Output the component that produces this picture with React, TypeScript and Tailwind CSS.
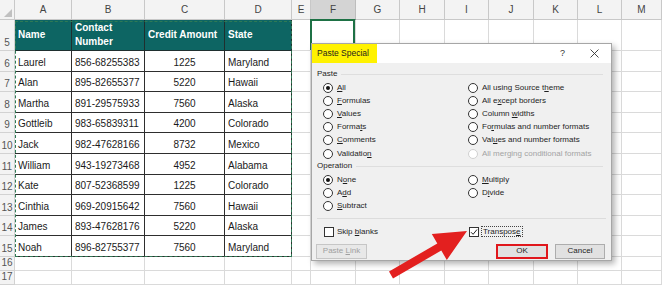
import clsx from 'clsx'

const widths = [
  'w-[15px]', 'w-[57px]', 'w-[73px]', 'w-[80px]', 'w-[67px]', 'w-[19px]', 'w-[45px]',
  'w-[44px]', 'w-[45px]', 'w-[44px]', 'w-[45px]', 'w-[44px]', 'w-[44px]', 'w-[40px]',
]
const letters = ['A', 'B', 'C', 'D', 'E', 'F', 'G', 'H', 'I', 'J', 'K', 'L', 'M']

const people = [
  ['Laurel', '856-68255383', '1225', 'Maryland'],
  ['Alan', '895-82655377', '5220', 'Hawaii'],
  ['Martha', '891-29575933', '7560', 'Alaska'],
  ['Gottleib', '983-65839311', '4200', 'Colorado'],
  ['Jack', '982-47628166', '8732', 'Mexico'],
  ['William', '943-19273468', '4952', 'Alabama'],
  ['Kate', '807-52368599', '1225', 'Colorado'],
  ['Cinthia', '969-20915642', '7560', 'Hawaii'],
  ['James', '893-47628176', '5220', 'Alaska'],
  ['Noah', '896-82755377', '7560', 'Maryland'],
]

// "&" marks the accelerator letter
function Label({ text, disabled }: { text: string; disabled?: boolean }) {
  const i = text.indexOf('&')
  const pre = text.slice(0, i)
  const key = text.charAt(i + 1)
  const post = text.slice(i + 2)
  return (
    <span className={clsx('whitespace-nowrap', disabled && 'text-[#a3a3a3]')}>
      {pre}
      <span className="underline underline-offset-1">{key}</span>
      {post}
    </span>
  )
}

function Radio({ label, checked, disabled }: { label: string; checked?: boolean; disabled?: boolean }) {
  return (
    <div className="flex h-[13.2px] items-center gap-[4px]">
      <span
        className={clsx(
          'flex h-[10px] w-[10px] items-center justify-center rounded-full border bg-white',
          disabled ? 'border-[#d0d0d0] bg-[#f4f4f4]' : 'border-[#333]'
        )}
      >
        {checked && <span className="h-[4px] w-[4px] rounded-full bg-[#111]" />}
      </span>
      <Label text={label} disabled={disabled} />
    </div>
  )
}

function Check({ checked }: { checked?: boolean }) {
  return (
    <span className="flex h-[10px] w-[10px] items-center justify-center border border-[#333] bg-white">
      {checked && (
        <svg width="8" height="8" viewBox="0 0 8 8">
          <path d="M1 4.2 L3.1 6.3 L7 1.5" fill="none" stroke="#222" strokeWidth="1" />
        </svg>
      )}
    </span>
  )
}

function GroupLabel({ text }: { text: string }) {
  return (
    <div className="flex h-[12px] items-center gap-[4px] pl-[5px] pr-[8px]">
      <span>{text}</span>
      <span className="h-px flex-1 bg-[#dedede]" />
    </div>
  )
}

function Dialog() {
  return (
    <div className="absolute left-[311px] top-[43px] flex h-[218px] w-[301px] flex-col border border-[#a6a6a6] bg-[#f0f0f0] text-[8px] text-[#1e1e1e] shadow-[3px_3px_6px_rgba(0,0,0,0.3)]">
      <div className="flex h-[19px] shrink-0 items-center bg-white">
        <div className="flex h-full w-[65px] items-center bg-[#fff200] pl-[5px] text-[8.5px]">Paste Special</div>
        <div className="flex-1" />
        <span className="mr-[25px] text-[9px] text-[#333]">?</span>
        <svg width="9" height="9" viewBox="0 0 9 9" className="mr-[12px]">
          <path d="M0.5 0.5 L8.5 8.5 M8.5 0.5 L0.5 8.5" stroke="#333" strokeWidth="0.9" />
        </svg>
      </div>

      <div className="mt-[5px]">
        <GroupLabel text="Paste" />
      </div>
      <div className="mt-[1px] grid grid-cols-[145px_1fr] pl-[11px]">
        <div>
          <Radio label="&All" checked />
          <Radio label="&Formulas" />
          <Radio label="&Values" />
          <Radio label="Forma&ts" />
          <Radio label="&Comments" />
          <Radio label="Validatio&n" />
        </div>
        <div>
          <Radio label="All using Source t&heme" />
          <Radio label="All e&xcept borders" />
          <Radio label="Column &widths" />
          <Radio label="Fo&rmulas and number formats" />
          <Radio label="Val&ues and number formats" />
          <Radio label="All mer&ging conditional formats" disabled />
        </div>
      </div>

      <GroupLabel text="Operation" />
      <div className="mt-[1px] grid grid-cols-[145px_1fr] pl-[11px]">
        <div>
          <Radio label="N&one" checked />
          <Radio label="A&dd" />
          <Radio label="&Subtract" />
        </div>
        <div>
          <Radio label="&Multiply" />
          <Radio label="D&ivide" />
        </div>
      </div>

      <div className="mx-[5px] mt-[5px] h-px bg-[#dcdcdc]" />

      <div className="mt-[7px] grid h-[12px] grid-cols-[145px_1fr] pl-[12px]">
        <div className="flex items-center gap-[3px]">
          <Check />
          <Label text="Skip &blanks" />
        </div>
        <div className="flex items-center gap-[2px]">
          <Check checked />
          <span className="border border-dotted border-[#444] px-[1px] leading-[9px]">
            <Label text="Transpos&e" />
          </span>
        </div>
      </div>

      <div className="mt-[6px] flex h-[15px] items-stretch pl-[4px] pr-[6px]">
        <div className="flex w-[51px] items-center justify-center border border-[#c6c6c6] bg-[#e8e8e8] text-[#a0a0a0]">
          <Label text="Paste &Link" />
        </div>
        <div className="flex-1" />
        <div className="flex w-[52px] items-center justify-center border-2 border-[#e0171c] bg-[#e1e1e1]">OK</div>
        <div className="ml-[7px] flex w-[50px] items-center justify-center border border-[#adadad] bg-[#e1e1e1]">
          Cancel
        </div>
      </div>
    </div>
  )
}

function RowHead({ n, h }: { n: number; h?: string }) {
  return (
    <div
      className={clsx(
        widths[0],
        'flex shrink-0 items-end justify-center border-b border-r border-[#d2d2d2] bg-[#f3f3f3] pb-[1px] text-[10px] leading-[12px] text-[#555]',
        h
      )}
    >
      {n}
    </div>
  )
}

function Blanks({ from, first }: { from: number; first?: boolean }) {
  return (
    <>
      {widths.slice(from).map((w, i) => {
        const col = from + i
        return (
          <div
            key={col}
            className={clsx(
              w,
              'shrink-0 border-b border-r border-[#dadada]',
              col === 6 && first && 'relative'
            )}
          >
            {col === 6 && first && <div className="absolute -left-px -top-px bottom-0 right-0 border-2 border-[#1e7145]" />}
          </div>
        )
      })}
    </>
  )
}

export default function App() {
  return (
    <div className="relative h-[285px] w-[662px] overflow-hidden bg-white font-['Liberation_Sans',Arial,sans-serif]">
      {/* column headers */}
      <div className="flex h-[20px]">
        <div className={clsx(widths[0], 'relative shrink-0 border-b border-r border-[#c8c8c8] bg-[#f3f3f3]')}>
          <svg width="8" height="8" viewBox="0 0 8 8" className="absolute bottom-[2px] right-[2px]">
            <path d="M8 0 L8 8 L0 8 Z" fill="#c0c0c0" />
          </svg>
        </div>
        {letters.map((l, i) => (
          <div
            key={l}
            className={clsx(
              widths[i + 1],
              'flex shrink-0 items-center justify-center border-b border-r text-[10px] text-[#444]',
              l === 'F' ? 'border-b-[#1e7145] border-r-[#bdbdbd] bg-[#d4d4d4]' : 'border-[#c8c8c8] bg-[#f3f3f3]'
            )}
          >
            {l}
          </div>
        ))}
      </div>

      {/* header row 5 */}
      <div className="flex h-[31px]">
        <RowHead n={5} />
        {['Name', 'Contact Number', 'Credit Amount', 'State'].map((t, i) => (
          <div
            key={t}
            className={clsx(
              widths[i + 1],
              'flex shrink-0 items-center border-b border-r border-[#1f2f2f] bg-[#0d6563] px-[3px] text-[10px] font-bold leading-[14px] text-white'
            )}
          >
            {t === 'Contact Number' ? (
              <span>
                Contact
                <br />
                Number
              </span>
            ) : (
              t
            )}
          </div>
        ))}
        <Blanks from={5} first />
      </div>

      {people.map((p, r) => (
        <div key={r} className="flex h-[20.6px]">
          <RowHead n={r + 6} />
          {p.map((v, i) => (
            <div
              key={i}
              className={clsx(
                widths[i + 1],
                'flex shrink-0 items-end border-b border-r border-[#2e2e2e] px-[3px] pb-[2px] text-[10px] leading-[12px] text-[#1a1a1a]',
                i === 2 && 'justify-center'
              )}
            >
              {v}
            </div>
          ))}
          <Blanks from={5} />
        </div>
      ))}

      {[16, 17].map((n) => (
        <div key={n} className="flex h-[14px]">
          <RowHead n={n} />
          <Blanks from={1} />
        </div>
      ))}

      {/* copy marquee around A5:D15 */}
      <div className="pointer-events-none absolute left-[15px] top-[21px] h-[236px] w-[277px] border-[1.5px] border-dashed border-[#2f7a55]" />

      <Dialog />

      <svg className="pointer-events-none absolute left-0 top-0" width="662" height="285" viewBox="0 0 662 285">
        <polygon
          points="467,231 446.8,260 441.3,250.5 393,278.5 389,271.5 437.3,243.5 431.8,234"
          fill="#e3201f"
        />
      </svg>
    </div>
  )
}
